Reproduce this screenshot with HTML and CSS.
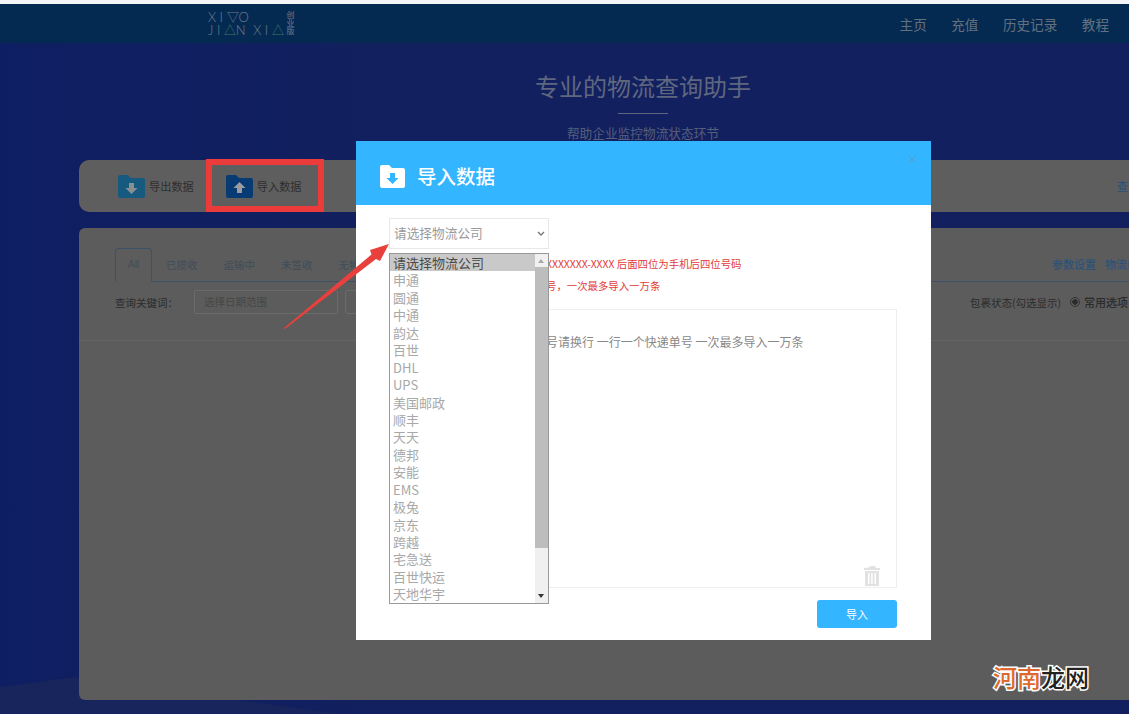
FILE: index.html
```html
<!DOCTYPE html>
<html lang="zh-CN">
<head>
  <meta charset="UTF-8">
  <title>导入数据</title>
  <link rel="stylesheet" href="styles.css">
</head>
<body>
<div class="page">

  <header class="topbar">
    <div class="logo">
      <div class="logo-word">
        <div>XI<b>▽</b>O</div>
        <div>JI<b>△</b>N XI<b>△</b></div>
      </div>
      <div class="logo-tag">创业版</div>
    </div>
    <nav class="nav">
      <a>主页</a>
      <a>充值</a>
      <a>历史记录</a>
      <a>教程</a>
    </nav>
  </header>

  <section class="hero">
    <h1>专业的物流查询助手</h1>
    <div class="hero-line"></div>
    <p>帮助企业监控物流状态环节</p>
  </section>

  <section class="toolbar">
    <a class="tool">
      <svg class="folder" viewBox="0 0 27 23"><path fill="#175a80" d="M0 2a2 2 0 0 1 2-2h8l3 3h12a2 2 0 0 1 2 2v16a2 2 0 0 1-2 2H2a2 2 0 0 1-2-2z"/><path fill="#8c8f90" d="M11 8h5v5h3.500l-6 6-6-6H11z"/></svg>
      导出数据
    </a>
    <a class="tool">
      <svg class="folder" viewBox="0 0 27 23"><path fill="#083a74" d="M0 2a2 2 0 0 1 2-2h8l3 3h12a2 2 0 0 1 2 2v16a2 2 0 0 1-2 2H2a2 2 0 0 1-2-2z"/><path fill="#9a9c9e" d="M13.500 7l6 6H16v5h-5v-5H7.500z"/></svg>
      导入数据
    </a>
    <a class="tool-link">查询记录</a>
  </section>

  <section class="panel">
    <div class="tabs">
      <a class="tab tab-active">All</a>
      <a class="tab">已揽收</a>
      <a class="tab">运输中</a>
      <a class="tab">未签收</a>
      <a class="tab">无物流</a>
      <div class="tab-links">
        <a>参数设置</a>
        <a>物流参数</a>
      </div>
    </div>
    <div class="filters">
      <label class="filter-label">查询关键词：</label>
      <div class="field field-date">选择日期范围</div>
      <div class="field"></div>
      <div class="status">
        包裹状态(勾选显示)
        <span class="radio"></span>
        <strong>常用选项</strong>
      </div>
    </div>
  </section>

  <div class="modal">
    <div class="modal-head">
      <svg class="modal-icon" viewBox="0 0 25 23"><path fill="#fff" d="M0 2a2 2 0 0 1 2-2h7l3 3h11a2 2 0 0 1 2 2v16a2 2 0 0 1-2 2H2a2 2 0 0 1-2-2z"/><path fill="#33b5ff" d="M10 8h5v5h3.500l-6 6-6-6H10z"/></svg>
      <h2>导入数据</h2>
      <span class="modal-close">×</span>
    </div>
    <div class="modal-body">
      <div class="select">
        请选择物流公司
        <svg class="chevron" viewBox="0 0 8 5"><path fill="none" stroke="#777" stroke-width="1.400" d="M1 1l3 3 3-3"/></svg>
      </div>
      <div class="notes">
        <p class="note-first">XXXXXXX-XXXX 后面四位为手机后四位号码</p>
        <p class="note-second">号，一次最多导入一万条</p>
      </div>
      <div class="numbers">
        <span class="numbers-hint">多个快递单号请换行 一行一个快递单号 一次最多导入一万条</span>
        <svg class="trash" viewBox="0 0 16 20"><path fill="#e2e2e2" d="M6 0h5l1 2h4v2H0V2l5-.5zM1 5h14v15H1zm3 2v11h1.500V7zm3.200 0v11h1.500V7zm3.300 0v11H12V7z" fill-rule="evenodd"/></svg>
      </div>
      <div class="modal-foot">
        <button class="btn-import">导入</button>
      </div>

      <div class="dropdown">
        <ul class="options">
          <li class="option-on">请选择物流公司</li>
          <li>申通</li>
          <li>圆通</li>
          <li>中通</li>
          <li>韵达</li>
          <li>百世</li>
          <li>DHL</li>
          <li>UPS</li>
          <li>美国邮政</li>
          <li>顺丰</li>
          <li>天天</li>
          <li>德邦</li>
          <li>安能</li>
          <li>EMS</li>
          <li>极兔</li>
          <li>京东</li>
          <li>跨越</li>
          <li>宅急送</li>
          <li>百世快运</li>
          <li>天地华宇</li>
        </ul>
        <div class="scroll">
          <span class="scroll-up"></span>
          <span class="scroll-thumb"></span>
          <span class="scroll-down"></span>
        </div>
      </div>
    </div>
  </div>

  <div class="mark-box"></div>
  <svg class="mark-arrow" viewBox="0 0 120 100"><path fill="#e8403c" d="M1 89L88.500 15.500 87 11l19-6-9 17-4-2L2 90z"/></svg>
</div>

<div class="watermark"><span>河南</span>龙网</div>
</body>
</html>
```

FILE: styles.css
```css
* {
  box-sizing: border-box;
}

html, body {
  margin: 0;
  height: 100%;
  overflow: hidden;
  background: #12205f;
}

body {
  font-family: "Noto Sans CJK SC", "Liberation Sans", sans-serif;
  border-top: 4px solid #f4f5f6;
}

/* the page is wider than the window, the right part is cut off */
.page {
  position: relative;
  isolation: isolate;
  width: 1286px;
  height: 710px;
  background: linear-gradient(90deg, #0e1e62, #12205f 30%);
}

/* lighter shape of the background picture, bottom left */
.page::before {
  content: "";
  position: absolute;
  z-index: -1;
  inset: 0;
  background: #18245c;
  clip-path: polygon(0 683px, 75px 673px, 340px 710px, 0 710px);
}

.topbar {
  height: 39px;
  background: #052a52;
  display: flex;
  align-items: center;
  justify-content: space-between;
  padding: 0 177px 0 208px;
}

.logo {
  display: flex;
  gap: 4px;
  color: #6f7d8e;
}

.logo-word {
  font-family: Lato, "Liberation Sans", sans-serif;
  font-weight: 300;
  font-size: 13px;
  line-height: 13px;
  letter-spacing: 3.500px;
  word-spacing: -3px;
  white-space: nowrap;
  width: 74px;
}

.logo-word b {
  font-weight: normal;
  font-size: 12px;
  letter-spacing: 0;
}

.logo-word div:last-child b {
  color: #3f7a62;
}

.logo-tag {
  writing-mode: vertical-rl;
  font-size: 8px;
  line-height: 8px;
}

.nav {
  display: flex;
  gap: 24.500px;
}

.nav a {
  font-size: 13.600px;
  color: #63717f;
}

.hero {
  height: 117px;
  padding-top: 25px;
  text-align: center;
  color: #5f677f;
}

.hero h1 {
  margin: 0;
  font-size: 24px;
  font-weight: 400;
  line-height: 36px;
}

.hero-line {
  width: 50px;
  height: 1px;
  background: #5f677f;
  margin: 9px auto 0;
}

.hero p {
  margin: 9px 0 0;
  font-size: 12.700px;
  line-height: 19px;
  color: #565f7a;
}

.toolbar {
  margin: 0 79px;
  height: 52px;
  border-radius: 10px;
  background: #5e5e5e;
  display: flex;
  align-items: center;
  padding: 0 46px 0 39px;
}

.tool {
  display: flex;
  align-items: center;
  gap: 4px;
  font-size: 11.200px;
  color: #2e2e2e;
  margin-right: 32px;
}

.folder {
  width: 27px;
  height: 23px;
}

.tool-link {
  margin-left: auto;
  font-size: 11px;
  color: #24507f;
}

.panel {
  margin: 16px 79px 0;
  height: 472px;
  border-radius: 6px;
  background: #5c5c5c;
  padding: 20px 58px 0 36px;
}

.tabs {
  display: flex;
  height: 34px;
  border-bottom: 1px solid #3d5168;
}

.tab {
  font-size: 10.500px;
  line-height: 33px;
  color: #3f4c59;
  margin-right: 26px;
}

.tab-active {
  width: 37px;
  height: 34px;
  text-align: center;
  border: 1px solid #3d5168;
  border-bottom-color: #5c5c5c;
  border-radius: 4px 4px 0 0;
  margin-right: 14px;
  color: #454d55;
  font-family: "Liberation Sans", sans-serif;
  line-height: 31px;
}

.tab-links {
  margin-left: auto;
  display: flex;
  gap: 9px;
  font-size: 11px;
  line-height: 33px;
  color: #24507f;
}

.filters {
  display: flex;
  align-items: center;
  height: 59px;
  padding-bottom: 18px;
  margin: 0 -58px 0 -36px;
  padding-left: 36px;
  padding-right: 53px;
  border-bottom: 1px solid #646464;
  font-size: 10.500px;
  color: #2b2b2b;
}

.filter-label {
  width: 79px;
}

.field {
  width: 144px;
  height: 24px;
  border: 1px solid #6b6b6b;
  border-radius: 2px;
  margin-right: 7px;
  padding-left: 9px;
  line-height: 22px;
  color: #474747;
}

.status {
  margin-left: auto;
  display: flex;
  align-items: center;
  white-space: nowrap;
}

.radio {
  width: 10px;
  height: 10px;
  margin: 0 4px 0 9px;
  border-radius: 50%;
  border: 1px solid #333;
  background: radial-gradient(circle, #2b2b2b 0, #2b2b2b 2.500px, transparent 3px);
}

.status strong {
  margin-right: 26px;
  font-weight: 500;
  font-size: 11px;
}

/* dialog */
.modal {
  position: absolute;
  left: 356px;
  top: 137px;
  width: 575px;
  height: 499px;
  background: #fff;
}

.modal-head {
  position: relative;
  height: 64px;
  background: #33b5ff;
  display: flex;
  align-items: center;
  padding-left: 24px;
  gap: 12px;
  color: #fff;
}

.modal-icon {
  width: 25px;
  height: 23px;
  margin-top: 6px;
}

.modal-head h2 {
  margin: 4px 0 0;
  font-size: 19.500px;
  font-weight: 500;
}

.modal-close {
  position: absolute;
  right: 13px;
  top: 10px;
  font-size: 11px;
  line-height: 16px;
  color: #5a9cc4;
}

.modal-body {
  position: relative;
  padding: 13px 34px 0 33px;
}

.select {
  position: relative;
  width: 160px;
  height: 31px;
  border: 1px solid #e8e8e8;
  padding-left: 4px;
  font-size: 12.700px;
  line-height: 28px;
  color: #9a9a9a;
}

.chevron {
  position: absolute;
  right: 3px;
  top: 12px;
  width: 8px;
  height: 5px;
}

.notes {
  padding: 4px 0 0 160px;
  height: 60px;
  font-size: 10.400px;
  color: #e23b3b;
}

.notes p {
  margin: 0;
  height: 22px;
  line-height: 22px;
  white-space: nowrap;
}

/* both lines start under the opened list */
.notes .note-first {
  margin-left: -3px;
}

.notes .note-second {
  margin-left: -3px;
}

.numbers {
  position: relative;
  height: 279px;
  border: 1px solid #eee;
  padding: 23px 0 0 96px;
  font-size: 12px;
  line-height: 18px;
  color: #888;
  white-space: nowrap;
}

.trash {
  position: absolute;
  right: 16px;
  bottom: 1px;
  width: 16px;
  height: 20px;
}

.modal-foot {
  display: flex;
  justify-content: flex-end;
  padding-top: 12px;
}

.btn-import {
  width: 80px;
  height: 28px;
  border: none;
  border-radius: 3px;
  background: #33b5ff;
  color: #fff;
  font-family: inherit;
  font-size: 11px;
}

/* opened list of the select */
.dropdown {
  position: absolute;
  left: 33px;
  top: 48px;
  width: 160px;
  height: 351px;
  border: 1px solid #999;
  background: #fff;
  display: flex;
}

.options {
  list-style: none;
  margin: 0;
  padding: 0;
  flex: 1;
  font-size: 13px;
  line-height: 17.450px;
  color: #a8a8a8;
}

.options li {
  height: 17.450px;
  padding-left: 3px;
  white-space: nowrap;
  overflow: hidden;
}

.options .option-on {
  background: #c9c9c9;
  color: #4a4a4a;
}

.scroll {
  position: relative;
  width: 13px;
  background: #f0f0f0;
}

.scroll-thumb {
  position: absolute;
  top: 13px;
  left: 0;
  right: 0;
  height: 281px;
  background: #bdbdbd;
}

.scroll-up,
.scroll-down {
  position: absolute;
  left: 3px;
  width: 0;
  height: 0;
  border-left: 3.500px solid transparent;
  border-right: 3.500px solid transparent;
}

.scroll-up {
  top: 5px;
  border-bottom: 4px solid #a8a8a8;
}

.scroll-down {
  bottom: 5px;
  border-top: 4px solid #333;
}

/* red marks drawn on top of the screenshot */
.mark-box {
  position: absolute;
  left: 206px;
  top: 155px;
  width: 118px;
  height: 53px;
  border: 6px solid #ec3b3b;
}

.mark-arrow {
  position: absolute;
  left: 283px;
  top: 235px;
  width: 120px;
  height: 100px;
  overflow: visible;
}

.watermark {
  position: absolute;
  left: 993px;
  top: 662px;
  font-size: 24px;
  font-weight: 500;
  line-height: 30px;
  color: #222;
  -webkit-text-stroke: 3px #fff;
  paint-order: stroke fill;
  white-space: nowrap;
}

.watermark span {
  color: #dd6a2c;
}
```
